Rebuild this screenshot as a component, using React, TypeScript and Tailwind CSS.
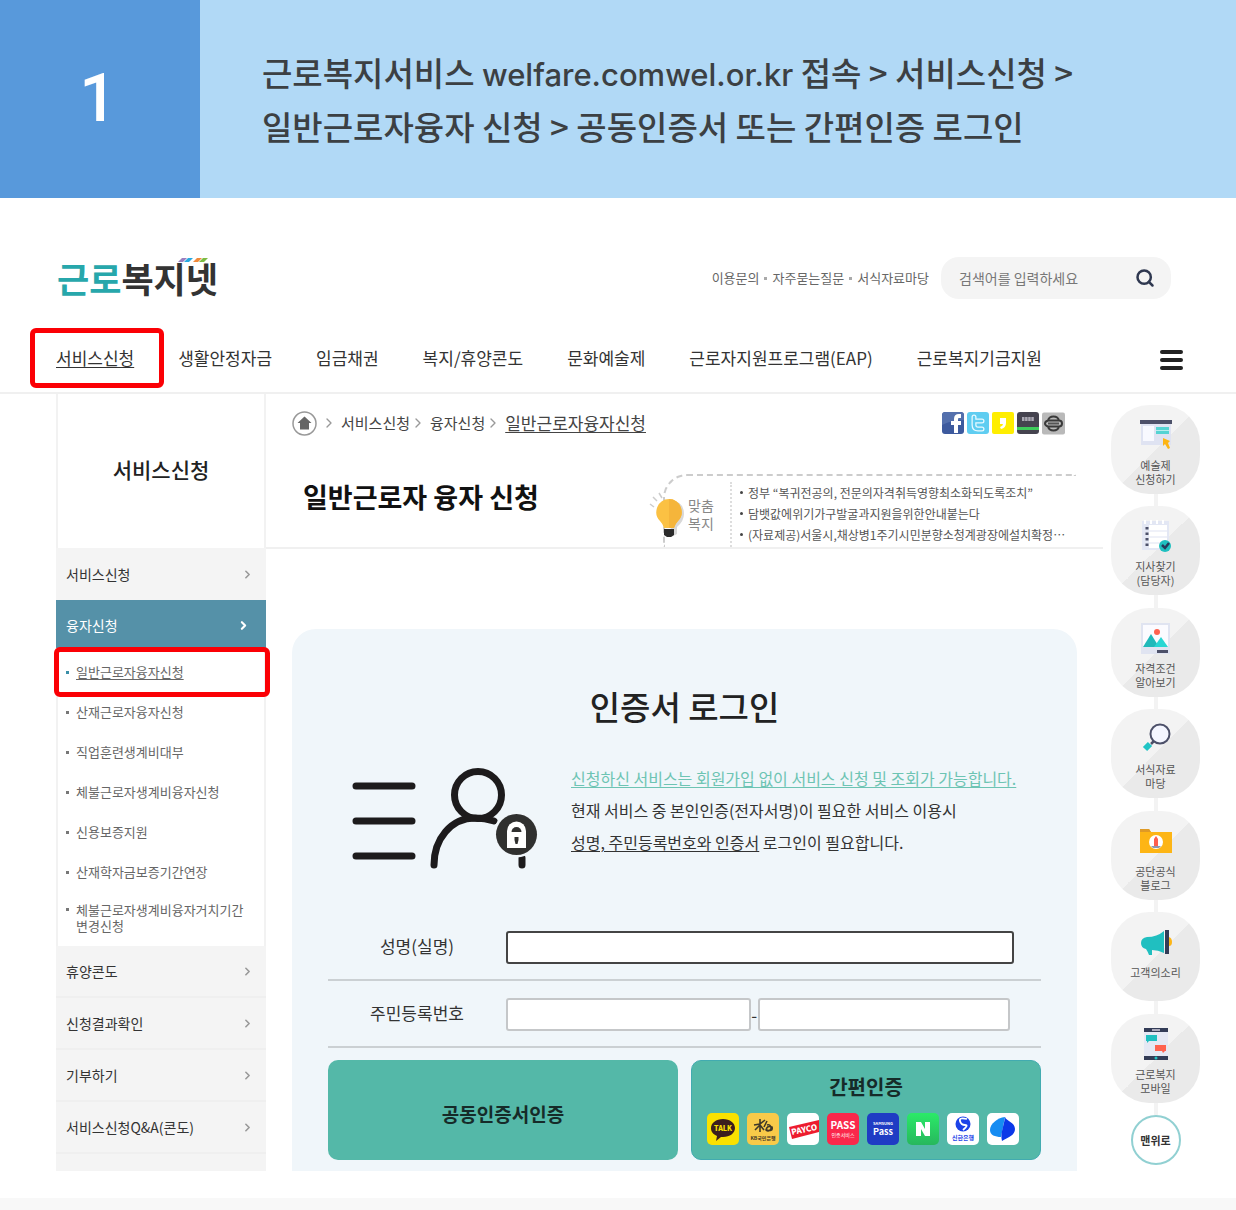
import React from "react";
import { ChevronRight, Search } from "lucide-react";

const navItems = ["서비스신청", "생활안정자금", "임금채권", "복지/휴양콘도", "문화예술제", "근로자지원프로그램(EAP)", "근로복지기금지원"];

const loanItems = [
  "일반근로자융자신청",
  "산재근로자융자신청",
  "직업훈련생계비대부",
  "체불근로자생계비융자신청",
  "신용보증지원",
  "산재학자금보증기간연장",
];

const lowerItems = ["휴양콘도", "신청결과확인", "기부하기", "서비스신청Q&A(콘도)"];

const news = [
  "정부 “복귀전공의, 전문의자격취득영향최소화되도록조치”",
  "담뱃값에위기가구발굴과지원을위한안내붙는다",
  "(자료제공)서울시,채상병1주기시민분향소청계광장에설치확정…",
];

function Banner() {
  return (
    <section className="flex bg-[#b1d9f6]">
      <div className="flex w-[200px] shrink-0 items-center justify-center bg-[#5899db] pr-1 font-['Roboto'] text-[66px] leading-none font-medium text-white">1</div>
      <h1 className="py-[45px] pr-4 pl-[62px] text-[33px] leading-[54px] font-medium text-[#3c4043]">
        근로복지서비스 <span className="font-['Inter'] text-[31px] leading-none">welfare.comwel.or.kr</span> 접속 &gt; 서비스신청 &gt;
        <br />
        일반근로자융자 신청 &gt; 공동인증서 또는 간편인증 로그인
      </h1>
    </section>
  );
}

function Header() {
  return (
    <header className="border-b-2 border-[#f0f0f0] pt-[59px] pb-1">
      <div className="flex items-center justify-between pr-[65px] pl-[57px]">
        <a href="#home" className="relative text-[35px] leading-[42px] font-bold text-[#333]">
          <span className="text-[#27a7ab]">근로</span>복지넷
          <svg className="absolute top-0 right-2 h-2 w-8" viewBox="0 0 32 8" aria-hidden="true">
            <path d="M4 1h5L5 5H0z" fill="#9a7fc0" />
            <path d="M10 1h5l-4 4H6z" fill="#29a9e0" />
            <path d="M19 1h5l-4 4h-5z" fill="#f08a3c" />
            <path d="M25 1h5l-4 4h-5z" fill="#7cbb42" />
          </svg>
        </a>
        <div className="flex items-center gap-3">
          <ul className="flex items-center gap-[5px] text-[13px] leading-5 text-[#666]">
            <li><a href="#contact">이용문의</a></li>
            <li className="size-[3px] bg-[#aaa]" aria-hidden="true" />
            <li><a href="#faq">자주묻는질문</a></li>
            <li className="size-[3px] bg-[#aaa]" aria-hidden="true" />
            <li><a href="#forms">서식자료마당</a></li>
          </ul>
          <form className="flex h-[42px] w-[230px] items-center justify-between rounded-[18px] bg-[#f4f4f4] pr-4 pl-[18px]">
            <input aria-label="검색어" placeholder="검색어를 입력하세요" className="w-[140px] bg-transparent text-[14px] outline-none placeholder:text-[#777]" />
            <button type="button" aria-label="검색"><Search size={20} strokeWidth={3} color="#2f3850" /></button>
          </form>
        </div>
      </div>
      <nav className="mt-[29px] flex items-center justify-between pr-[53px] pl-14" aria-label="주 메뉴">
        <ul className="flex gap-11 text-[17px] leading-6 whitespace-nowrap text-[#333]">
          {navItems.map((item, i) => (
            <li key={item} className="relative">
              <a href="#menu" className={i === 0 ? "block py-[18px] underline underline-offset-2" : "block py-[18px]"}>{item}</a>
              {i === 0 && <span className="pointer-events-none absolute inset-y-0 -right-[30px] -left-[26px] rounded-md border-[5px] border-[#fb0005]" />}
            </li>
          ))}
        </ul>
        <button type="button" aria-label="전체 메뉴" className="mt-1 flex w-[23px] flex-col gap-1">
          <span className="h-[4px] w-full rounded-sm bg-[#222]" />
          <span className="h-[4px] w-full rounded-sm bg-[#222]" />
          <span className="h-[4px] w-full rounded-sm bg-[#222]" />
        </button>
      </nav>
    </header>
  );
}

function Sidebar() {
  return (
    <aside className="flex w-[210px] shrink-0 flex-col bg-[#f4f4f4] text-[14px] leading-5 text-[#333]">
      <h2 className="border-x-2 border-[#f2f2f2] bg-white pt-[59px] pb-[63px] text-center text-[21px] leading-8 font-medium text-[#222]">서비스신청</h2>
      <a href="#service" className="flex items-center justify-between py-4 pr-3 pl-2.5">
        서비스신청
        <ChevronRight size={13} strokeWidth={3} color="#999" />
      </a>
      <a href="#loan" className="flex items-center justify-between bg-[#5591a8] pt-[15px] pb-[13px] pr-4 pl-2.5 text-white">
        융자신청
        <ChevronRight size={13} strokeWidth={4} />
      </a>
      <ul className="border-x-2 border-[#f2f2f2] bg-white pt-1 pb-0.5 text-[13px] text-[#666]">
        {loanItems.map((item, i) => (
          <li key={item} className="relative">
            <a href="#loan-item" className="flex items-center gap-[7px] py-2.5 pl-2">
              <span className={i === 0 ? "size-[3px] bg-[#3a8fa8]" : "size-[3px] bg-[#777]"} />
              <span className={i === 0 ? "underline underline-offset-2" : ""}>{item}</span>
            </a>
            {i === 0 && <span className="pointer-events-none absolute -top-[5px] -right-[6px] -bottom-[5px] -left-[4px] rounded-md border-[5px] border-[#fb0005]" />}
          </li>
        ))}
        <li>
          <a href="#loan-item" className="flex gap-[7px] py-2.5 pl-2 leading-4">
            <span className="mt-1.5 size-[3px] shrink-0 bg-[#777]" />
            <span>체불근로자생계비융자거치기간<br />변경신청</span>
          </a>
        </li>
      </ul>
      {lowerItems.map((item) => (
        <a key={item} href="#section" className="flex items-center justify-between border-b-2 border-[#efefef] py-[15px] pr-3 pl-2.5">
          {item}
          <ChevronRight size={13} strokeWidth={3} color="#999" />
        </a>
      ))}
    </aside>
  );
}

function ShareIcons() {
  return (
    <div className="flex gap-[3px]">
      <button type="button" aria-label="페이스북">
        <svg className="size-[22px]" viewBox="0 0 22 22"><rect width="22" height="22" rx="3" fill="#3d5a9e" /><path d="M0 4q0-4 4-4h14q4 0 4 4v4Q10 8 0 13z" fill="#5470ad" /><path d="M12 21v-8H9V9h3V7q0-5 5-5h2v4h-2q-1 0-1 1v2h3v4h-3v8z" fill="#fff" /></svg>
      </button>
      <button type="button" aria-label="트위터">
        <svg className="size-[22px]" viewBox="0 0 22 22"><rect width="22" height="22" rx="3" fill="#5fcdf1" /><path d="M7 5v8q0 4 4 4h4M7 9h8" fill="none" stroke="#e9faff" strokeWidth="5" strokeLinecap="round" /><path d="M7 5v8q0 4 4 4h4M7 9h8" fill="none" stroke="#5fcdf1" strokeWidth="2.5" strokeLinecap="round" /></svg>
      </button>
      <button type="button" aria-label="카카오스토리">
        <svg className="size-[22px]" viewBox="0 0 22 22"><rect width="22" height="22" rx="2" fill="#ffee00" /><path d="M8 6h6v5q0 5-5 6l-1-2q3-1 3-3H8z" fill="#fff" /></svg>
      </button>
      <button type="button" aria-label="밴드">
        <svg className="size-[22px]" viewBox="0 0 22 22"><rect width="22" height="22" rx="3" fill="#45434f" /><path d="M0 15h22v3H0z" fill="#3ecb5b" /><path d="M5 7h12" stroke="#aaa8b3" strokeWidth="4" strokeDasharray="2.5 .6" /></svg>
      </button>
      <button type="button" aria-label="인쇄">
        <svg className="size-[23px]" viewBox="0 0 23 22"><rect width="23" height="22" rx="2" fill="#b9b9b9" /><path d="M6 8q1-4 5.500-4T17 8M6 14q-3-1-3-3t3-3h11q3 0 3 3t-3 3M6 14q1 4 5.500 4t5.500-4z" fill="none" stroke="#3a3a3a" strokeWidth="2" strokeLinejoin="round" /><path d="M6 11h11" stroke="#555" strokeWidth="2" /></svg>
      </button>
    </div>
  );
}

function PageHead() {
  return (
    <div className="border-b-2 border-[#f0f0f0] pl-[26px]">
      <div className="flex items-center justify-between pt-4 pr-[38px]">
        <ol className="flex items-center text-[15px] leading-[26px] text-[#444]">
          <li>
            <a href="#home" aria-label="홈">
              <svg className="size-[25px]" viewBox="0 0 25 25"><circle cx="12.5" cy="12.5" r="11.5" fill="none" stroke="#999" strokeWidth="1.5" /><path d="M12.5 5.5 5.5 12H8v6.500h9V12h2.500z" fill="#666" /></svg>
            </a>
          </li>
          <ChevronRight size={16} color="#999" className="mx-1" />
          <li><a href="#service">서비스신청</a></li>
          <ChevronRight size={16} color="#999" className="mr-1" />
          <li><a href="#loan">융자신청</a></li>
          <ChevronRight size={16} color="#999" className="mr-1" />
          <li className="text-[17px] underline underline-offset-2">일반근로자융자신청</li>
        </ol>
        <ShareIcons />
      </div>
      <div className="mt-[38px] flex justify-between pr-[27px]">
        <h2 className="pl-[11px] text-[27px] leading-[46px] font-bold whitespace-nowrap text-[#111]">일반근로자 융자 신청</h2>
        <div className="relative flex w-[413px] rounded-tl-[24px] border-t-2 border-l-2 border-dashed border-[#ccc] pt-1.5">
          <svg className="absolute top-4 -left-4 h-[50px] w-9" viewBox="0 0 36 50" aria-hidden="true">
            <path d="M1 12l4 3M4 5l4 4M10 1l3 5" stroke="#ccc" strokeWidth="1.500" />
            <path d="M21 8q14 1 14 14 0 7-7 13v7l-6 3z" fill="#d8d8d8" />
            <path d="M20 7a13 13 0 0 1 9 22q-3 3-4 7H15q-1-4-4-7A13 13 0 0 1 20 7z" fill="#fbc143" />
            <path d="M20 7a13 13 0 0 1 9 22q-3 3-4 7h-5z" fill="#f5b53b" />
            <path d="M15 37h10v6l-3 2h-4l-3-2z" fill="#2b2b2b" />
          </svg>
          <div className="w-[67px] shrink-0 border-r-2 border-dotted border-[#ddd] pt-3.5 pl-[23px] text-[14px] leading-[18px] text-[#888]">맞춤<br />복지</div>
          <ul className="pb-0.5 pl-2 text-[12px] leading-[21px] whitespace-nowrap text-[#555]">
            {news.map((n) => (
              <li key={n} className="flex items-center gap-[5px]"><span className="size-[3px] rounded-full bg-[#444]" /><a href="#news">{n}</a></li>
            ))}
          </ul>
        </div>
      </div>
    </div>
  );
}

const providers: { name: string; art: React.ReactNode }[] = [
  { name: "카카오톡", art: <><rect width="32" height="32" rx="5" fill="#fae100" /><path d="M16 6c7 0 12 4 12 9s-5 9-12 9h-2l-5 4 1-5c-4-2-6-4-6-8 0-5 5-9 12-9z" fill="#3b1e1e" /><text x="16" y="18" fontSize="7" fontWeight="900" textAnchor="middle" fill="#fae100">TALK</text></> },
  { name: "KB국민은행", art: <><rect width="32" height="32" rx="5" fill="#f8ca49" /><path d="M13 6v13M7 12l6-1 5-4M8 17l5-5 4 5M20 8l-3 6m3-2a3 3 0 1 1-1 5q1-5 6-3c1 4-2 4-5 3" fill="none" stroke="#3f3829" strokeWidth="1.600" /><text x="16" y="27" fontSize="5" fontWeight="700" textAnchor="middle" fill="#3f3829">KB국민은행</text></> },
  { name: "PAYCO", art: <><rect width="32" height="32" rx="5" fill="#fff" /><path d="M2 14 32 7v12L5 26z" fill="#ed1c2e" /><text x="5" y="22" fontSize="8" fontWeight="900" fill="#fff" transform="rotate(-12 5 22)">PAYCO</text></> },
  { name: "PASS", art: <><rect width="32" height="32" rx="5" fill="#fa284b" /><text x="16" y="16" fontSize="10" fontWeight="700" textAnchor="middle" fill="#fff">PASS</text><text x="16" y="24" fontSize="5" textAnchor="middle" fill="#fff">인증서비스</text></> },
  { name: "삼성패스", art: <><rect width="32" height="32" rx="5" fill="#1f3cc4" /><text x="16" y="12" fontSize="4" fontWeight="700" textAnchor="middle" fill="#fff">SAMSUNG</text><text x="16" y="22" fontSize="9" fontWeight="700" textAnchor="middle" fill="#fff">Pass</text></> },
  { name: "네이버", art: <><defs><linearGradient id="naver" x2="0" y2="1"><stop stopColor="#2bea68" /><stop offset="1" stopColor="#27b75d" /></linearGradient></defs><rect width="32" height="32" rx="5" fill="url(#naver)" /><path d="M9 9h5l4 7V9h5v14h-5l-4-7v7H9z" fill="#fff" /></> },
  { name: "신한은행", art: <><rect width="32" height="32" rx="5" fill="#fff" /><circle cx="16" cy="11" r="7.500" fill="#1c43e8" /><path d="M20 6q-8-2-7 2t5 4-2 5" fill="none" stroke="#fff" strokeWidth="1.800" /><text x="16" y="27" fontSize="6" fontWeight="700" textAnchor="middle" fill="#1c43e8">신한은행</text></> },
  { name: "토스", art: <><rect width="32" height="32" rx="5" fill="#fff" /><path d="M18 4C10 5 3 11 3 17c0 5 5 7 11 7z" fill="#168cf2" /><path d="M18 4c1 4 10 5 10 12 0 6-6 8-13 12-2-8 2-15 3-24z" fill="#0b38e8" /></> },
];

function LoginIllustration() {
  return (
    <svg className="h-[102px] w-[187px] shrink-0" viewBox="0 0 187 102" role="img" aria-label="인증서 로그인">
      <g fill="none" stroke="#1d1b1c" strokeWidth="7" strokeLinecap="round">
        <path d="M4 18h56M4 53h56M4 88h56" />
        <circle cx="126" cy="27" r="23.500" />
        <path d="M82 97c0-26 17-47 41-47q10 0 19 3M170 90v7" />
      </g>
      <circle cx="164.500" cy="66.500" r="23" fill="#f1f6fa" />
      <circle cx="164.500" cy="66.500" r="20.500" fill="#30302f" />
      <path d="M155 66V63a9.500 9.500 0 0 1 19 0v17h-19z" fill="#fff" />
      <path d="M159.500 64a5 5 0 0 1 10 0z" fill="#30302f" />
      <path d="M162.500 69h4v3l-1 4h-2l-1-4z" fill="#30302f" />
    </svg>
  );
}

function LoginPanel() {
  return (
    <section className="mx-[26px] mt-20 rounded-t-[24px] bg-[#f0f6fa] px-9 pt-[53px] pb-[11px] text-[#333]">
      <h3 className="text-center text-[33px] leading-[48px] font-medium text-[#222]">인증서 로그인</h3>
      <div className="mt-8 flex gap-8 pl-6">
        <div className="pt-1.5"><LoginIllustration /></div>
        <p className="text-[16px] leading-8 whitespace-nowrap">
          <a href="#service" className="text-[#6dc4b3] underline underline-offset-2">신청하신 서비스는 회원가입 없이 서비스 신청 및 조회가 가능합니다.</a>
          <br />
          현재 서비스 중 본인인증(전자서명)이 필요한 서비스 이용시
          <br />
          <u className="underline-offset-2">성명, 주민등록번호와 인증서</u> 로그인이 필요합니다.
        </p>
      </div>
      <form>
        <div className="mt-[61px] flex items-center border-b-2 border-[#cbd0d3] pr-[27px] pb-[15px] text-[17px]">
          <label htmlFor="name" className="w-[178px] shrink-0 pb-1 text-center">성명(실명)</label>
          <input id="name" className="h-[33px] min-w-0 flex-1 rounded-[3px] border-2 border-[#444] bg-white px-2 outline-none" />
        </div>
        <div className="flex items-center border-b-2 border-[#cbd0d3] pt-[17px] pr-[31px] pb-[15px] text-[17px]">
          <label htmlFor="rrn1" className="w-[178px] shrink-0 pb-1 text-center">주민등록번호</label>
          <input id="rrn1" className="h-[33px] min-w-0 flex-[30] rounded-[3px] border-2 border-[#c5c7c9] bg-white px-2 outline-none" />
          <span className="w-[7px] text-center leading-none">-</span>
          <input id="rrn2" type="password" aria-label="주민등록번호 뒷자리" className="h-[33px] min-w-0 flex-[31] rounded-[3px] border-2 border-[#c5c7c9] bg-white px-2 outline-none" />
        </div>
        <div className="mt-3 grid grid-cols-2 gap-[13px] text-[#162b29]">
          <button type="button" className="rounded-[10px] bg-[#54b8a8] pt-2 text-[19px] font-bold">공동인증서인증</button>
          <div className="flex flex-col items-center rounded-[10px] border border-[#42abb0] bg-[#54b8a8] pt-3 pb-[14px]">
            <button type="button" className="text-[20px] leading-7 font-bold">간편인증</button>
            <div className="mt-3 flex gap-2 pr-1.5">
              {providers.map((p) => (
                <button key={p.name} type="button" aria-label={p.name}>
                  <svg className="size-8" viewBox="0 0 32 32">{p.art}</svg>
                </button>
              ))}
            </div>
          </div>
        </div>
      </form>
    </section>
  );
}

const quickLinks: { lines: string[]; art: React.ReactNode }[] = [
  { lines: ["예술제", "신청하기"], art: <><path d="M1 5h30v21H1z" fill="#dfe3f2" /><path d="M3 7h11v15H3z" fill="#f8f9ff" /><path d="M0 1h32v4H0z" fill="#4c5069" /><path d="M16 8h13v7H16z" fill="#55d3d3" /><path d="M16 11.500h13" stroke="#b8eeee" /><path d="M23 19l7 3-2 2 2 5-2 1-3-5-2 2z" fill="#fdb515" /></> },
  { lines: ["지사찾기", "(담당자)"], art: <><path d="M2 1h27v29H2z" fill="#e3e7f4" /><path d="M9 5h18v23H9zM4 0h2v4H4zM10 0h2v4h-2zM16 0h2v4h-2zM22 0h2v4h-2z" fill="#fff" /><path d="M9 11h18M9 17h18M9 23h18" stroke="#dfe3f2" /><path d="M7 7v20" stroke="#4c5069" strokeWidth="3" strokeDasharray="2.500 3" /><circle cx="25" cy="26" r="6" fill="#1fc0c0" /><path d="M22 25l3 3 4-5" fill="none" stroke="#26395a" strokeWidth="2.500" /></> },
  { lines: ["자격조건", "알아보기"], art: <><path d="M1 1h29v31H1z" fill="#e0e4f1" /><path d="M3 3h25v22H3z" fill="#fbfbff" /><circle cx="17" cy="10" r="3" fill="#ff624f" /><path d="M3 25l8-13 8 13z" fill="#1fb9ba" /><path d="M14 25l7-10 7 10z" fill="#28d6d4" /><path d="M17 28h11v3H17z" fill="#4c5069" /></> },
  { lines: ["서식자료", "마당"], art: <><circle cx="20" cy="11" r="9.500" fill="#f4f6ff" stroke="#4c5069" strokeWidth="2" /><path d="M14 18l-3 3" stroke="#4c5069" strokeWidth="2.500" /><path d="M10 21l-5 5" stroke="#20c4c5" strokeWidth="6" /></> },
  { lines: ["공단공식", "블로그"], art: <><path d="M0 4h9l2 3h21v21H0z" fill="#fdb515" /><path d="M0 4h9l2 3H0z" fill="#df9a26" /><circle cx="16" cy="17" r="7" fill="#fff" /><path d="M14 21v-7l2-3 2 3v7z" fill="#ff5e4d" /><path d="M11 21h10l-2 2h-6z" fill="#8f98b0" /></> },
  { lines: ["고객의소리"], art: <><path d="M24 5v22q-6-3-12-3v5H9q-1-3-3-6-5-1-5-6t6-6q10 0 17-6z" fill="#20bfc0" /><path d="M25 4h4v24h-4z" fill="#333c57" /><path d="M29 11q3 1 3 5t-3 4z" fill="#fdb515" /></> },
  { lines: ["근로복지", "모바일"], art: <><path d="M4 1h24v31H4z" fill="#e5e8f4" /><path d="M4 0h24v4H4zM4 28h24v4H4z" fill="#333c57" /><path d="M12 2h8" stroke="#aab" strokeWidth="2" /><path d="M6 7h11v6h-8l-2 2v-2H6z" fill="#20bfc0" /><path d="M15 17h11v6h-1l-2 2-1-2h-7z" fill="#ff624f" /><circle cx="16" cy="30" r="1.500" fill="#20c4c5" /></> },
];

function QuickRail() {
  return (
    <nav className="mx-2 flex w-[89px] shrink-0 flex-col items-center pt-[11px] pb-1.5 text-[11px] leading-[14px] text-[#555]" aria-label="퀵 메뉴">
      {quickLinks.map((q) => (
        <React.Fragment key={q.lines[0]}>
          <a href="#quick" className="flex h-[89px] w-full flex-col items-center rounded-[38px] bg-linear-[135deg,#f3f3f3_50%,#eaeaea_50%] pt-[14px] text-center">
            <svg className="h-[33px] w-8" viewBox="0 0 32 33" aria-hidden="true">{q.art}</svg>
            <span className="mt-1.5 flex flex-col">
              {q.lines.map((l) => <span key={l}>{l}</span>)}
            </span>
          </a>
          <span className="w-1 flex-1 bg-[#f3f3f3]" />
        </React.Fragment>
      ))}
      <a href="#top" className="flex size-[50px] items-center justify-center rounded-full border-2 border-[#91d0d2] font-bold text-[#333]">맨위로</a>
    </nav>
  );
}

export default function App() {
  return (
    <div className="flex min-h-screen flex-col bg-white font-['Noto_Sans_CJK_KR','Noto_Sans',sans-serif]">
      <Banner />
      <Header />
      <div className="flex pr-7 pl-14">
        <Sidebar />
        <main className="min-w-0 flex-1">
          <PageHead />
          <LoginPanel />
        </main>
        <QuickRail />
      </div>
      <footer className="mt-[27px] min-h-3 flex-1 bg-[#f8f8f8]" />
    </div>
  );
}
